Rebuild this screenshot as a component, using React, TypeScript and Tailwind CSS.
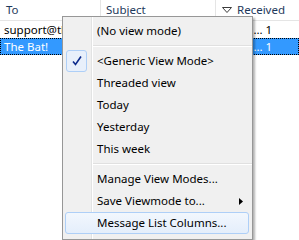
import React from "react";

const font = { fontFamily: '"Segoe UI", "Noto Sans", "DejaVu Sans", sans-serif' };

function Item({ label, check, hover, arrow }: { label: string; check?: boolean; hover?: boolean; arrow?: boolean }) {
  return (
    <div className="relative h-[22px] flex items-center">
      {hover && (
        <div className="absolute left-[2px] right-[3px] top-0 bottom-0 rounded-[3px] border border-[#aecff7] bg-gradient-to-b from-[#f2f7fd] to-[#e4eefb]" />
      )}
      {check && (
        <div className="absolute left-[3px] top-0 w-[21px] h-[22px] rounded-[3px] border border-[#aecff7] bg-[#e8f0fb] flex items-center justify-center">
          <svg width="12" height="12" viewBox="0 0 12 12">
            <path d="M2 6.5 L4.5 9.5 L10 1.5" fill="none" stroke="#0c2a8c" strokeWidth="1.6" />
          </svg>
        </div>
      )}
      <span className="relative pl-[34px] text-[11.5px] text-black leading-none">{label}</span>
      {arrow && (
        <svg className="absolute right-[9px] top-[8px]" width="4" height="7" viewBox="0 0 4 7">
          <path d="M0 0 L4 3.5 L0 7 Z" fill="#000" />
        </svg>
      )}
    </div>
  );
}

function Sep() {
  return (
    <div className="h-[8px] flex items-center pl-[30px]">
      <div className="w-full border-t border-[#e0e0e0] border-b border-b-white" />
    </div>
  );
}

export default function App() {
  return (
    <div className="relative w-[299px] h-[240px] bg-white overflow-hidden" style={font}>
      <div className="flex h-[21px] border-b border-[#e5e5e5] bg-white text-[11.5px] text-[#1e395b]">
        <div className="w-[101px] border-r border-[#e5e5e5] flex items-center pl-[6px]">To</div>
        <div className="w-[115px] border-r border-[#e5e5e5] flex items-center pl-[5px]">Subject</div>
        <div className="flex-1 flex items-center pl-[6px] gap-[5px]">
          <svg width="10" height="6" viewBox="0 0 10 6">
            <path d="M0.5 0.5 L9.5 0.5 L5 5.5 Z" fill="none" stroke="#3c3c3c" strokeWidth="1" />
          </svg>
          Received
        </div>
      </div>
      <div className="flex h-[17px] text-[11.5px] text-black items-center">
        <div className="w-[62px] pl-[4px] whitespace-nowrap overflow-hidden">support@thebat.net</div>
        <div className="w-[154px]" />
        <div className="flex-1 pl-[5px] whitespace-nowrap overflow-hidden">2014, ... 1</div>
      </div>
      <div className="flex h-[17px] text-[11.5px] text-white items-center bg-[#3399ff] border border-dotted border-black">
        <div className="w-[61px] pl-[3px] whitespace-nowrap overflow-hidden">The Bat!</div>
        <div className="w-[154px]" />
        <div className="flex-1 pl-[5px] whitespace-nowrap overflow-hidden">2014, ... 1</div>
      </div>

      <div className="absolute left-[62px] top-[16px] w-[191px] h-[224px] bg-[#f0f0f0] border border-[#979797] shadow-[2px_2px_2px_rgba(0,0,0,0.3)] pt-[3px]">
        <div className="absolute left-[28px] top-0 bottom-0 w-[2px] border-l border-[#e2e3e3] border-r border-r-white" />
        <Item label="(No view mode)" />
        <Sep />
        <Item label="<Generic View Mode>" check />
        <Item label="Threaded view" />
        <Item label="Today" />
        <Item label="Yesterday" />
        <Item label="This week" />
        <Sep />
        <Item label="Manage View Modes..." />
        <Item label="Save Viewmode to..." arrow />
        <Item label="Message List Columns..." hover />
      </div>
    </div>
  );
}
